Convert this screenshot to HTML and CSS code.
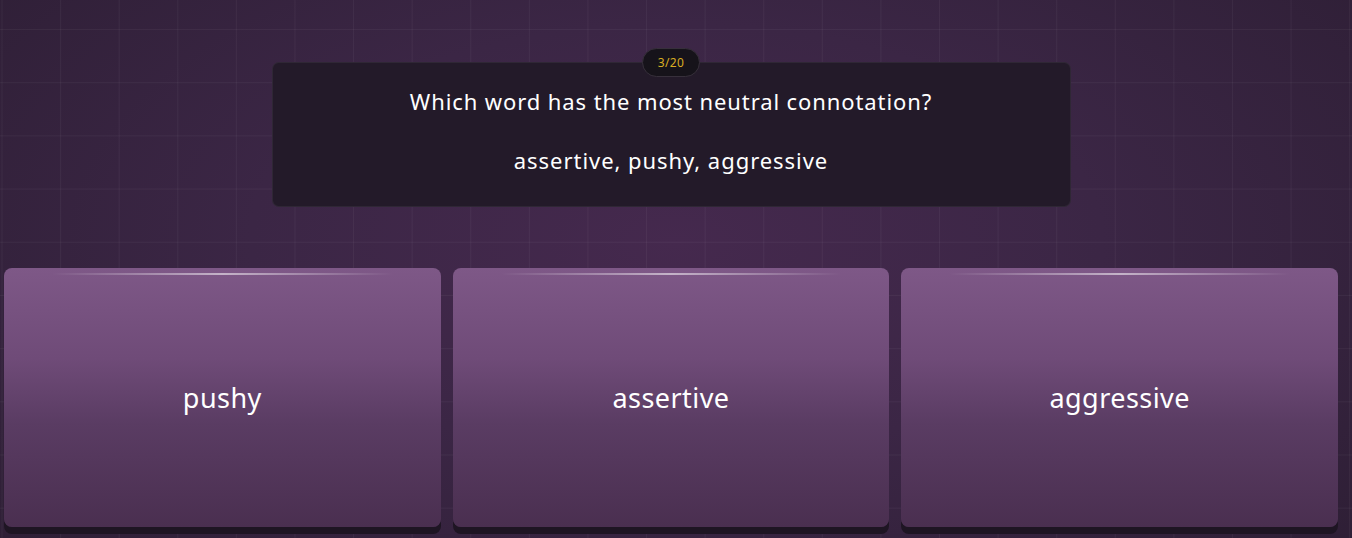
FILE: index.html
```html
<!DOCTYPE html>
<html lang="en">
<head>
<meta charset="utf-8">
<title>Quiz</title>
<link rel="stylesheet" href="styles.css">
</head>
<body>
<div class="page">
  <div class="grid"></div>
  <main class="content">
    <section class="question-wrap">
      <div class="badge">3/20</div>
      <div class="question-card">
        <p class="question">Which word has the most neutral connotation?</p>
        <p class="words">assertive, pushy, aggressive</p>
      </div>
    </section>
    <section class="answers">
      <button class="answer"><span>pushy</span></button>
      <button class="answer"><span>assertive</span></button>
      <button class="answer"><span>aggressive</span></button>
    </section>
  </main>
</div>
</body>
</html>
```

FILE: styles.css
```css
* { box-sizing: border-box; }
html, body { margin: 0; padding: 0; }
body {
  width: 1352px;
  height: 538px;
  overflow: hidden;
  font-family: "Noto Sans", "Open Sans", sans-serif;
  color: #fff;
}
.page {
  position: relative;
  width: 1352px;
  height: 538px;
  background: radial-gradient(ellipse 70% 90% at 50% 45%, #45294e 0%, #3b2645 45%, #2d1e34 100%);
  overflow: hidden;
}
.grid {
  position: absolute;
  inset: 0;
  background-image:
    linear-gradient(to right, rgba(255,255,255,0.045) 1px, transparent 1px),
    linear-gradient(to bottom, rgba(255,255,255,0.045) 1px, transparent 1px);
  background-size: 58.6px 53.2px;
  background-position: 1.5px 29px;
  pointer-events: none;
}
.content {
  position: relative;
  display: flex;
  flex-direction: column;
}
.question-wrap {
  display: flex;
  flex-direction: column;
  align-items: center;
  padding-top: 48px;
  padding-right: 10px;
}
.badge {
  position: relative;
  z-index: 2;
  height: 29px;
  padding: 0 15px;
  border-radius: 15px;
  background: #16131a;
  border: 1px solid #37303b;
  color: #d8ad22;
  font-size: 12px;
  letter-spacing: 0.3px;
  line-height: 27px;
  margin-bottom: -15px;
}
.question-card {
  width: 799px;
  height: 145px;
  background: #231a29;
  border: 1px solid rgba(255,255,255,0.06);
  border-radius: 7px;
  display: flex;
  flex-direction: column;
  align-items: center;
  padding-top: 24px;
}
.question-card p { margin: 0; }
.question {
  font-size: 22px;
  letter-spacing: 0.9px;
  line-height: 28px;
}
.words {
  margin-top: 31px !important;
  font-size: 22px;
  letter-spacing: 0.95px;
  line-height: 28px;
}
.answers {
  display: flex;
  gap: 12px;
  width: 1338px;
  padding-left: 4px;
  margin-top: 61px;
}
.answer {
  position: relative;
  flex: 1 1 0;
  height: 259px;
  border: none;
  border-radius: 8px;
  background: linear-gradient(to bottom, #7e5887 0%, #6f4b78 35%, #5a3c63 60%, #4a2f50 100%);
  box-shadow: 0 7px 0 #1e1523;
  color: #fff;
  font-family: inherit;
  font-size: 27px;
  letter-spacing: 0.45px;
  display: flex;
  align-items: center;
  justify-content: center;
  padding: 0;
}
.answer::before {
  content: "";
  position: absolute;
  top: 5px;
  left: 48px;
  right: 48px;
  height: 2px;
  background: linear-gradient(to right, rgba(255,255,255,0) 0%, rgba(255,255,255,0.55) 50%, rgba(255,255,255,0) 100%);
}
.answer span { position: relative; top: 0; }
```
